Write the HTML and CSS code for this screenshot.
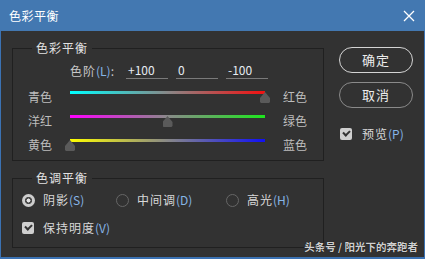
FILE: index.html
```html
<!DOCTYPE html>
<html lang="zh-CN">
<head>
    <meta charset="UTF-8">
    <title>色彩平衡</title>
    <link rel="stylesheet" href="styles.css">
</head>
<body>
    <div class="window">
        <div class="titlebar">
            <span class="title">色彩平衡</span>
            <svg class="close" width="12" height="12" viewBox="0 0 12 12">
                <path d="M1 1 L11 11 M11 1 L1 11" stroke="#fff" stroke-width="1.3" fill="none"/>
            </svg>
        </div>
        <div class="content">
            <div class="main">
                <div class="group g1">
                    <span class="legend">色彩平衡</span>
                    <div class="levels">
                        <span class="levels-label">色阶<span class="key">(L)</span>:</span>
                        <div class="field">+100</div>
                        <div class="field">0</div>
                        <div class="field">-100</div>
                    </div>
                    <div class="slider-row">
                        <span class="lbl">青色</span>
                        <div class="track cyan-red"><span class="thumb" style="left: 100%"></span></div>
                        <span class="lbl right">红色</span>
                    </div>
                    <div class="slider-row">
                        <span class="lbl">洋红</span>
                        <div class="track magenta-green"><span class="thumb" style="left: 50%"></span></div>
                        <span class="lbl right">绿色</span>
                    </div>
                    <div class="slider-row">
                        <span class="lbl">黄色</span>
                        <div class="track yellow-blue"><span class="thumb" style="left: 0%"></span></div>
                        <span class="lbl right">蓝色</span>
                    </div>
                </div>
                <div class="group g2">
                    <span class="legend">色调平衡</span>
                    <div class="radios">
                        <label class="radio-item w1"><span class="radio on"></span>阴影<span class="key">(S)</span></label>
                        <label class="radio-item w2"><span class="radio"></span>中间调<span class="key">(D)</span></label>
                        <label class="radio-item"><span class="radio"></span>高光<span class="key">(H)</span></label>
                    </div>
                    <label class="check-item"><span class="checkbox"></span>保持明度<span class="key">(V)</span></label>
                </div>
            </div>
            <div class="side">
                <div class="btn default">确定</div>
                <div class="btn">取消</div>
                <label class="check-item preview"><span class="checkbox"></span>预览<span class="key">(P)</span></label>
            </div>
        </div>
        <div class="watermark">头条号 / 阳光下的奔跑者</div>
    </div>
</body>
</html>
```

FILE: styles.css
```css
* { box-sizing: border-box; }
body {
    margin: 0;
    background: #323232;
    font-family: "Noto Sans CJK SC", "Noto Sans", sans-serif;
    font-size: 12px;
    color: #d2d2d2;
}
.window {
    position: relative;
    width: 425px;
    height: 259px;
    background: #323232;
    border: 1px solid #3b72b3;
    border-top: none;
    border-bottom: 2px solid #3b72b3;
}
.titlebar {
    height: 31px;
    margin: 0 -1px;
    background: #4378b1;
    display: flex;
    align-items: center;
    justify-content: space-between;
    padding: 0 10px 0 9px;
}
.title {
    color: #fff;
    font-size: 12px;
    letter-spacing: 0.5px;
    line-height: 1;
}
.close { display: block; margin-top: 1px; }

.content { display: flex; }
.main { padding-left: 11px; padding-top: 17px; width: 323px; }
.side { margin-left: 15px; padding-top: 16px; display: flex; flex-direction: column; }

.group {
    position: relative;
    border: 1px solid #202020;
    width: 312px;
}
.g1 { height: 113px; padding: 13px 0 0 15px; }
.g2 { height: 70px; margin-top: 17px; padding: 12px 0 0 9px; }
.legend {
    position: absolute;
    top: -9px;
    left: 19px;
    padding: 0 4px;
    background: #323232;
    color: #e2e2e2;
    letter-spacing: 1px;
    line-height: 16px;
}
.key { color: #86b4e6; letter-spacing: 0; }

.levels {
    display: flex;
    align-items: flex-end;
    height: 17px;
    padding-left: 42px;
    margin-bottom: 8px;
}
.levels-label {
    letter-spacing: 1px;
    line-height: 16px;
    margin-right: 11px;
    color: #c8c8c8;
}
.field {
    width: 42px;
    margin-right: 8px;
    border-bottom: 1px solid #7a7a7a;
    padding-left: 2px;
    color: #e6ecf2;
    line-height: 16px;
}

.slider-row {
    display: grid;
    grid-template-columns: 42px 195px 1fr;
    height: 24px;
}
.lbl {
    color: #bdbdbd;
    line-height: 16px;
    padding-top: 2px;
}
.lbl.right { padding-left: 18px; }
.track {
    position: relative;
    height: 3px;
    margin-top: 4px;
}
.cyan-red { background: linear-gradient(to right, #00ffff, #888 50%, #f21010); }
.magenta-green { background: linear-gradient(to right, #ff00ff, #8a8a8a 50%, #1ee61e); }
.yellow-blue { background: linear-gradient(to right, #ffff00, #888 50%, #1010f5); }
.thumb {
    position: absolute;
    top: 1px;
    width: 10px;
    height: 11px;
    margin-left: -5px;
    background: #5a5a5a;
    clip-path: polygon(50% 0, 100% 55%, 100% 90%, 90% 100%, 10% 100%, 0 90%, 0 55%);
}

.radios { display: flex; height: 18px; align-items: center; }
.radio-item, .check-item {
    display: flex;
    align-items: center;
    letter-spacing: 1px;
    color: #d8d8d8;
    line-height: 18px;
}
.w1 { width: 94px; }
.w2 { width: 110px; }
.radio {
    width: 13px;
    height: 13px;
    border-radius: 50%;
    border: 1.5px solid #666;
    margin-right: 8px;
}
.radio.on {
    border: none;
    background: radial-gradient(circle, #e4e4e4 0 1.8px, #4a4a4a 2.2px 3.4px, #cdcdcd 3.8px);
}
.check-item { margin-top: 10px; height: 18px; }
.checkbox {
    position: relative;
    width: 12px;
    height: 12px;
    border-radius: 2px;
    background: #cfcfcf;
    margin-right: 9px;
}
.checkbox::after {
    content: "";
    position: absolute;
    left: 3px;
    top: 2px;
    width: 5px;
    height: 3px;
    border-left: 2px solid #333;
    border-bottom: 2px solid #333;
    transform: rotate(-45deg);
}

.btn {
    width: 74px;
    height: 26px;
    border-radius: 13px;
    border: 1.5px solid #8a8a8a;
    text-align: center;
    line-height: 23px;
    color: #ececec;
    font-size: 13px;
    letter-spacing: 1px;
}
.btn.default { border-color: #d4d4d4; }
.btn + .btn { margin-top: 9px; }
.preview { margin-top: 17px; padding-left: 1px; }
.preview .checkbox { margin-right: 10px; }

.watermark {
    position: absolute;
    right: 6px;
    bottom: 3px;
    font-size: 10.5px;
    font-weight: bold;
    color: #cfcfcf;
    text-shadow: 0 0 1px #000;
    line-height: 14px;
}
```
